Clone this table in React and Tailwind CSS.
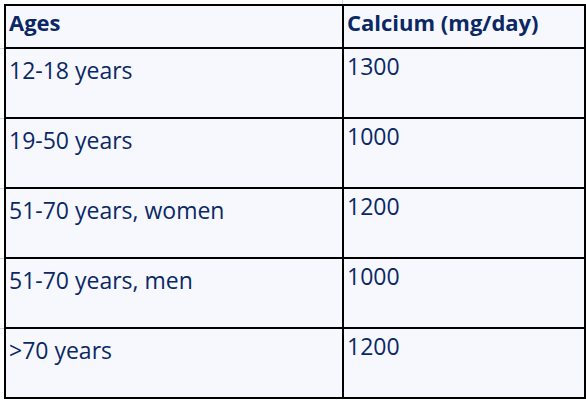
import React from "react";

const rows = [
  ["12-18 years", "1300"],
  ["19-50 years", "1000"],
  ["51-70 years, women", "1200"],
  ["51-70 years, men", "1000"],
  [">70 years", "1200"],
];

export default function App() {
  return (
    <div className="relative w-[586px] h-[400px] bg-white overflow-hidden" style={{ fontFamily: '"Open Sans", sans-serif' }}>
      <div className="absolute left-[342px] top-0 w-px h-[4px] bg-[#d4d4d4]" />
      {[48, 118, 188, 258, 328].map((y) => (
        <div key={y} className="absolute left-0 w-[4px] h-px bg-[#d4d4d4]" style={{ top: y }} />
      ))}
      <div className="pt-[4px] pl-[4px]">
        <div className="grid w-[582px] grid-cols-[336px_240px] grid-rows-[41px_repeat(5,68px)] gap-[2px] bg-black p-[2px] text-[#0b2865]">
          <div className="bg-[#f6f8fd] pl-[3px] pt-[1px] text-[22px] font-bold leading-[30px]">Ages</div>
          <div className="bg-[#f6f8fd] pl-[3px] pt-[1px] text-[22px] font-bold leading-[30px]">Calcium (mg/day)</div>
          {rows.map(([a, b]) => (
            <React.Fragment key={a}>
              <div className="bg-[#f6f8fd] pl-[3px] pt-[6px] text-[23px] font-medium leading-[30px]">{a}</div>
              <div className="bg-[#f6f8fd] pl-[3px] pt-[2px] text-[23px] font-medium leading-[30px]">{b}</div>
            </React.Fragment>
          ))}
        </div>
      </div>
    </div>
  );
}
